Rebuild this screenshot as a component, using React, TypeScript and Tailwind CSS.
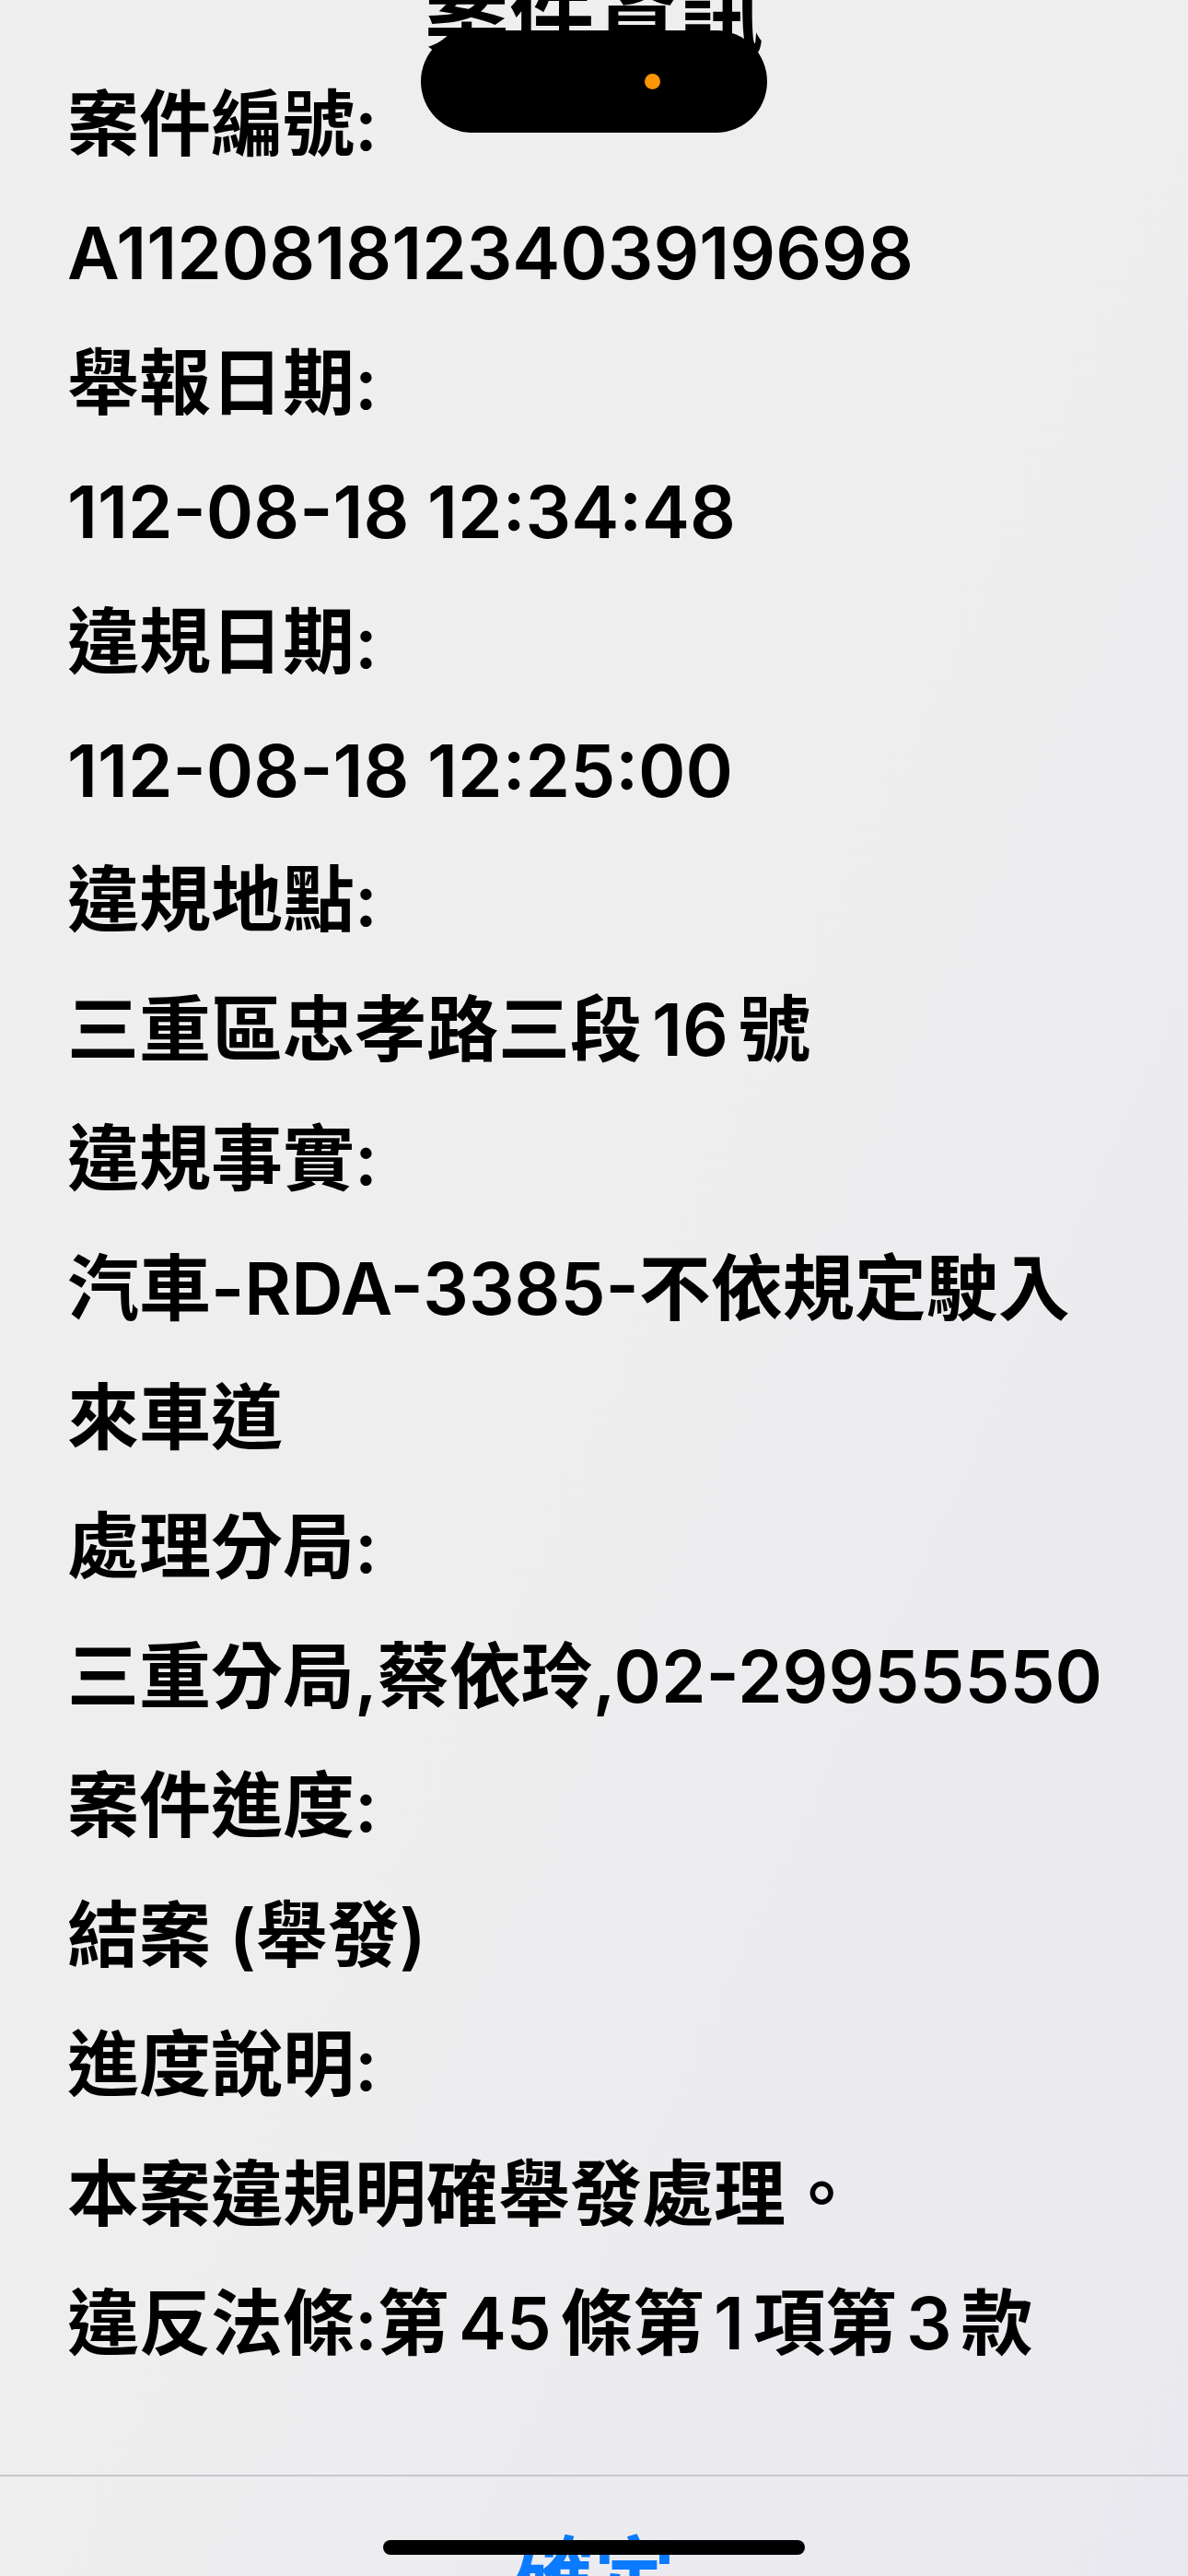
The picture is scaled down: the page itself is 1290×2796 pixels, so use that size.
import React from 'react'

const rows: React.ReactNode[] = [
  '案件編號:',
  'A1120818123403919698',
  '舉報日期:',
  '112-08-18 12:34:48',
  '違規日期:',
  '112-08-18 12:25:00',
  '違規地點:',
  <>
    三重區忠孝路三段<span className="px-[11px]">16</span>號
  </>,
  '違規事實:',
  '汽車-RDA-3385-不依規定駛入',
  '來車道',
  '處理分局:',
  '三重分局,蔡依玲,02-29955550',
  '案件進度:',
  '結案 (舉發)',
  '進度說明:',
  '本案違規明確舉發處理。',
  <>
    違反法條:第<span className="px-[10px]">45</span>條第<span className="px-[10px]">1</span>項第
    <span className="px-[10px]">3</span>款
  </>,
]

export default function App() {
  return (
    <div
      className="relative h-[2796px] w-[1290px] overflow-hidden bg-linear-to-br from-[#efefef] via-[#eeeeef] to-[#e9e9ef] text-black"
      style={{ fontFamily: '"Inter", "Noto Sans CJK TC", sans-serif' }}
    >
      <div className="flex h-full flex-col">
        <div className="-mt-[30px] text-center text-[92px] font-bold leading-[95px]">案件資訊</div>

        <div className="flex flex-col px-[73px] text-[78px] font-semibold leading-[140.4px]">
          {rows.map((r, i) => (
            <div key={i} className="whitespace-nowrap">
              {r}
            </div>
          ))}
        </div>

        <div className="mt-auto h-[2px] bg-[#c7c7cc]" />
        <div className="h-[108px] pt-[56px] text-center text-[88px] font-semibold leading-[100px] text-[#0a7aff]">
          確定
        </div>
      </div>

      {/* dynamic island */}
      <div className="absolute left-[457px] top-[33px] h-[111px] w-[376px] rounded-full bg-black">
        <div className="absolute left-[243px] top-[47px] h-[17px] w-[17px] rounded-full bg-[#ff9500]" />
      </div>

      {/* home indicator */}
      <div className="absolute left-[416px] top-[2757px] h-[16px] w-[458px] rounded-full bg-black" />
    </div>
  )
}
